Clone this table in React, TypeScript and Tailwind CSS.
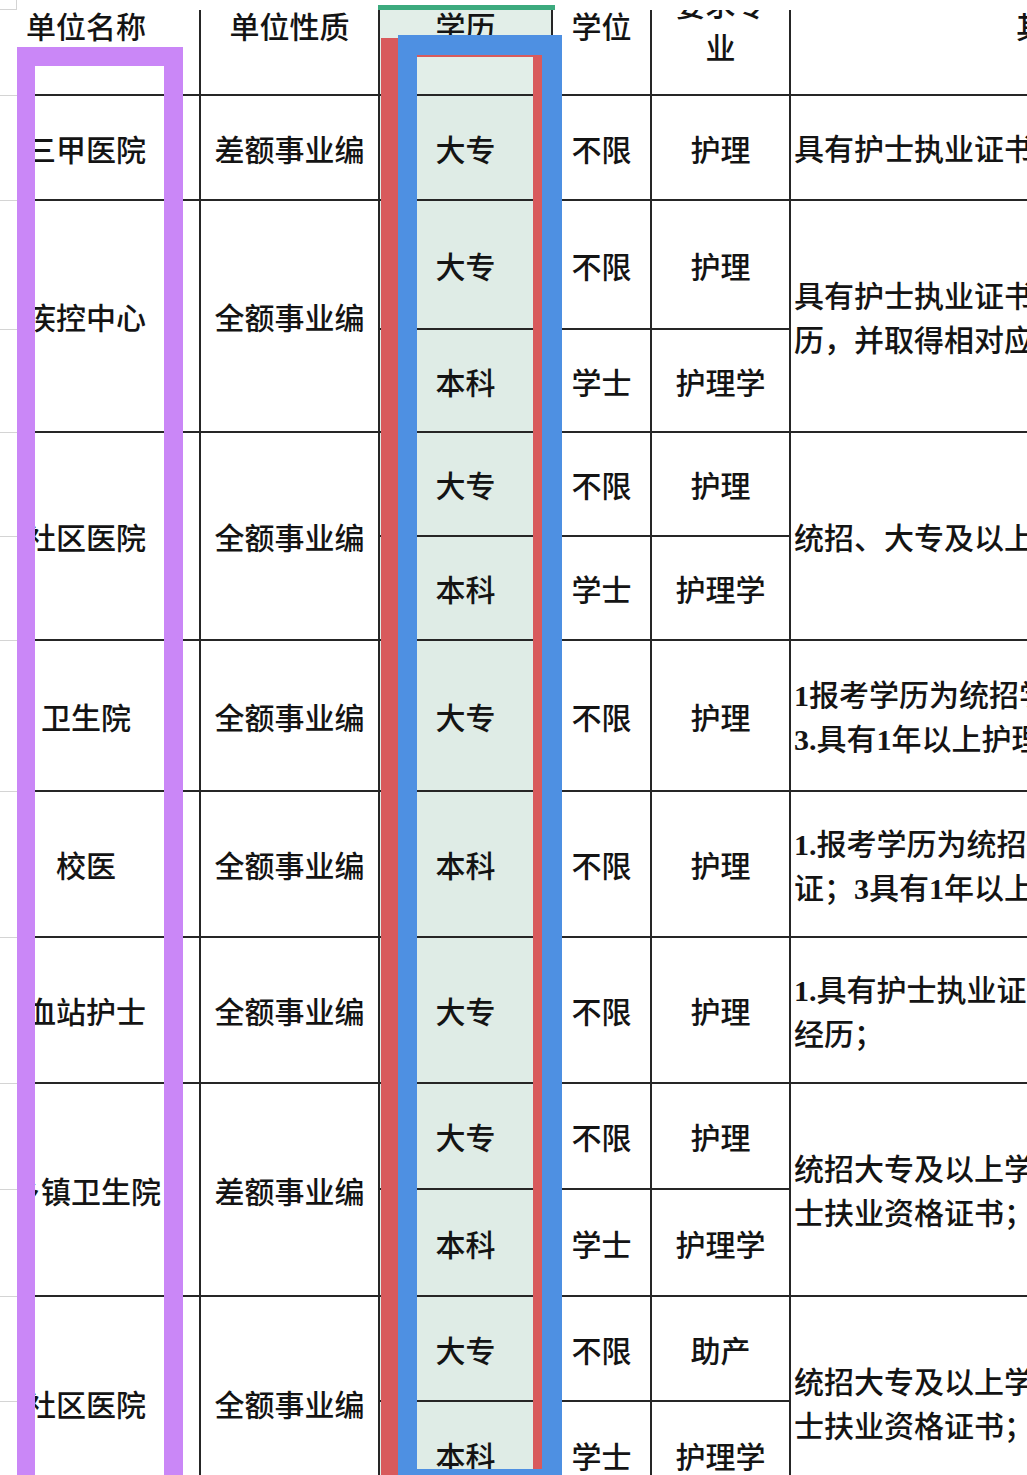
import clsx from "clsx";

type Sub = { h: string; edu: string; deg: string; major: string };
type Unit = { name: string; type: string; subs: Sub[]; note: string[] };

const units: Unit[] = [
  {
    name: "三甲医院",
    type: "差额事业编",
    subs: [{ h: "h-[105px]", edu: "大专", deg: "不限", major: "护理" }],
    note: ["具有护士执业证书，大专及以上学历"],
  },
  {
    name: "疾控中心",
    type: "全额事业编",
    subs: [
      { h: "h-[129px]", edu: "大专", deg: "不限", major: "护理" },
      { h: "h-[103px]", edu: "本科", deg: "学士", major: "护理学" },
    ],
    note: ["具有护士执业证书，统招大专及以上学", "历，并取得相对应学位"],
  },
  {
    name: "社区医院",
    type: "全额事业编",
    subs: [
      { h: "h-[104px]", edu: "大专", deg: "不限", major: "护理" },
      { h: "h-[104px]", edu: "本科", deg: "学士", major: "护理学" },
    ],
    note: ["统招、大专及以上学历"],
  },
  {
    name: "卫生院",
    type: "全额事业编",
    subs: [{ h: "h-[151px]", edu: "大专", deg: "不限", major: "护理" }],
    note: ["1报考学历为统招学历；2.具有护士", "3.具有1年以上护理工作经历"],
  },
  {
    name: "校医",
    type: "全额事业编",
    subs: [{ h: "h-[146px]", edu: "本科", deg: "不限", major: "护理" }],
    note: ["1.报考学历为统招本科学历；2.具有护士资格", "证；3具有1年以上工作经历"],
  },
  {
    name: "血站护士",
    type: "全额事业编",
    subs: [{ h: "h-[146px]", edu: "大专", deg: "不限", major: "护理" }],
    note: ["1.具有护士执业证书；2.具有相关工作", "经历；"],
  },
  {
    name: "乡镇卫生院",
    type: "差额事业编",
    subs: [
      { h: "h-[106px]", edu: "大专", deg: "不限", major: "护理" },
      { h: "h-[107px]", edu: "本科", deg: "学士", major: "护理学" },
    ],
    note: ["统招大专及以上学历，具有护", "士扶业资格证书；"],
  },
  {
    name: "社区医院",
    type: "全额事业编",
    subs: [
      { h: "h-[105px]", edu: "大专", deg: "不限", major: "助产" },
      { h: "h-[108px]", edu: "本科", deg: "学士", major: "护理学" },
    ],
    note: ["统招大专及以上学历，具有护", "士扶业资格证书；"],
  },
];

// digits in the remarks column look bold serif
function Note({ text }: { text: string }) {
  const parts = text.split(/(\d+\.?)/);
  return (
    <div className="whitespace-nowrap leading-[44px]">
      {parts.map((p, i) =>
        /\d/.test(p) ? (
          <span key={i} className="font-bold">
            {p}
          </span>
        ) : (
          <span key={i}>{p}</span>
        )
      )}
    </div>
  );
}

const line = "border-[#262626]";

function Header() {
  return (
    <div className="flex h-[86px]">
      <div className="w-[17px] shrink-0 border-b border-[#d4d4d4]" />
      <HeadCell w="w-[184px]" pad="pr-[44px]">单位名称</HeadCell>
      <HeadCell w="w-[179px]">单位性质</HeadCell>
      <HeadCell w="w-[173px]" green>
        学历
      </HeadCell>
      <HeadCell w="w-[99px]">学位</HeadCell>
      <HeadCell w="w-[139px]">
        <div className="flex flex-col items-center leading-[43px]">
          <span>要求专</span>
          <span>业</span>
        </div>
      </HeadCell>
      <HeadCell w="w-[572px]">其他条件</HeadCell>
    </div>
  );
}

function HeadCell({
  w,
  pad,
  green,
  children,
}: {
  w: string;
  pad?: string;
  green?: boolean;
  children: React.ReactNode;
}) {
  return (
    <div
      className={clsx(
        w,
        "shrink-0 overflow-hidden border-b-2 border-r-2",
        line,
        green && "bg-[#e2eee8]"
      )}
    >
      <div className={clsx("flex h-[34px] items-center justify-center", pad)}>{children}</div>
    </div>
  );
}

function UnitRow({ u }: { u: Unit }) {
  return (
    <div className="flex">
      <div className="flex w-[17px] shrink-0 flex-col">
        {u.subs.map((s, i) => (
          <div key={i} className={clsx(s.h, "border-b border-[#d4d4d4]")} />
        ))}
      </div>
      <div
        className={clsx(
          "flex w-[184px] shrink-0 items-center justify-center overflow-hidden border-b-2 border-r-2 pr-[44px] pt-[5px] whitespace-nowrap",
          line
        )}
      >
        {u.name}
      </div>
      <div
        className={clsx(
          "flex w-[179px] shrink-0 items-center justify-center border-b-2 border-r-2 pt-[5px] whitespace-nowrap",
          line
        )}
      >
        {u.type}
      </div>
      <div className="flex shrink-0 flex-col">
        {u.subs.map((s, i) => (
          <div key={i} className={clsx("flex", s.h)}>
            <div
              className={clsx(
                "flex w-[173px] items-center justify-center border-b-2 border-r-2 bg-[#dfece6] pt-[5px]",
                line
              )}
            >
              {s.edu}
            </div>
            <div className={clsx("flex w-[99px] items-center justify-center border-b-2 border-r-2 pt-[5px]", line)}>
              {s.deg}
            </div>
            <div className={clsx("flex w-[139px] items-center justify-center border-b-2 border-r-2 pt-[5px]", line)}>
              {s.major}
            </div>
          </div>
        ))}
      </div>
      <div
        className={clsx(
          "flex w-[572px] shrink-0 flex-col justify-center overflow-hidden border-b-2 border-r-2 pl-[3px] pt-[5px]",
          line
        )}
      >
        {u.note.map((t, i) => (
          <Note key={i} text={t} />
        ))}
      </div>
    </div>
  );
}

export default function App() {
  return (
    <div className="relative h-[1475px] w-[1027px] overflow-hidden bg-white font-[family-name:'Liberation_Serif','Noto_Sans_CJK_SC',serif] text-[30px] font-medium text-[#141414]">
      <div className="flex h-[10px]">
        <div className="w-[17px] border-b border-r border-[#d4d4d4]" />
        <div className="w-[361px]" />
        <div className="h-[5px] w-[177px] self-end bg-[#3caa7e]" />
      </div>
      <Header />
      {units.map((u, i) => (
        <UnitRow key={i} u={u} />
      ))}

      {/* hand-drawn highlight boxes */}
      <div className="absolute left-[381px] top-[38px] h-[1500px] w-[161px] border-l-[17px] border-r-[9px] border-t-[19px] border-[#d85a5c]" />
      <div className="absolute left-[398px] top-[35px] h-[1454px] w-[164px] border-[20px] border-l-[19px] border-[#4e90e2]" />
      <div className="absolute left-[17px] top-[47px] h-[1500px] w-[166px] border-[18px] border-t-[19px] border-r-[19px] border-b-0 border-[#ca87f7]" />
    </div>
  );
}
